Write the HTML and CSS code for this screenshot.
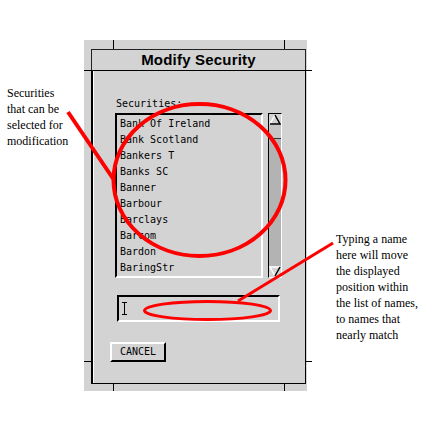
FILE: index.html
```html
<!DOCTYPE html>
<html>
<head>
    <meta charset="UTF-8">
    <title>Modify Security</title>
    <link rel="stylesheet" href="styles.css">
</head>
<body>
    <div class="page">
        <div class="window">
            <span class="tick tick-tl"></span>
            <span class="tick tick-tr"></span>
            <span class="tick tick-bl"></span>
            <span class="tick tick-br"></span>
            <span class="tick tick-lb"></span>
            <span class="tick tick-rb"></span>
            <span class="tick tick-rt"></span>

            <div class="titlebar">Modify Security</div>
            <div class="sep"></div>

            <div class="client">
                <div class="label">Securities:</div>
                <div class="list-row">
                    <div class="list">
                        <div class="item">Bank Of Ireland</div>
                        <div class="item">Bank Scotland</div>
                        <div class="item">Bankers T</div>
                        <div class="item">Banks SC</div>
                        <div class="item">Banner</div>
                        <div class="item">Barbour</div>
                        <div class="item">Barclays</div>
                        <div class="item">Barcom</div>
                        <div class="item">Bardon</div>
                        <div class="item">BaringStr</div>
                    </div>
                    <div class="scrollbar">
                        <svg class="arrow" width="12" height="11" viewBox="0 0 12 11">
                            <polyline points="1,10 6,1" fill="none" stroke="#fff" stroke-width="1.5"/>
                            <polyline points="6,1 11,10 1,10" fill="none" stroke="#000" stroke-width="1.5"/>
                        </svg>
                        <div class="slider"></div>
                        <div class="trough"></div>
                        <svg class="arrow" width="12" height="11" viewBox="0 0 12 11">
                            <polyline points="11,1 1,1 6,10" fill="none" stroke="#fff" stroke-width="1.5"/>
                            <polyline points="6,10 11,1" fill="none" stroke="#000" stroke-width="1.5"/>
                        </svg>
                    </div>
                </div>
                <div class="input">
                    <svg class="cursor" width="7" height="13" viewBox="0 0 7 13">
                        <path d="M1 0.5H6M3.5 0.5V12.5M1 12.5H6" fill="none" stroke="#000" stroke-width="1"/>
                    </svg>
                </div>
                <div class="btn">CANCEL</div>
            </div>
        </div>

        <div class="note note-left">Securities<br>that can be<br>selected for<br>modification</div>
        <div class="note note-right">Typing a name<br>here will move<br>the displayed<br>position within<br>the list of names,<br>to names that<br>nearly match</div>

        <svg class="marks" width="427" height="445" viewBox="0 0 427 445">
            <ellipse cx="199.5" cy="180" rx="86" ry="76" fill="none" stroke="#f00" stroke-width="4"/>
            <line x1="68" y1="112" x2="114" y2="180" stroke="#f00" stroke-width="4"/>
            <ellipse cx="207.5" cy="310.5" rx="63" ry="9" fill="none" stroke="#f00" stroke-width="3"/>
            <line x1="333" y1="243" x2="238" y2="301" stroke="#f00" stroke-width="3"/>
        </svg>
    </div>
</body>
</html>
```

FILE: styles.css
```css
body {
    margin: 0;
    background: #fff;
}
.page {
    position: relative;
    width: 427px;
    height: 445px;
    padding-top: 40px;
    box-sizing: border-box;
}
.window {
    position: relative;
    margin-left: 84px;
    width: 223px;
    height: 351px;
    padding-top: 9px;
    box-sizing: border-box;
    background: #d3d3d3;
    display: flex;
    flex-direction: column;
}
.tick {
    position: absolute;
    background: #000;
}
.tick-tl { left: 29px; top: 0; width: 1px; height: 9px; }
.tick-tr { left: 200px; top: 0; width: 1px; height: 9px; }
.tick-bl { left: 29px; bottom: 0; width: 1px; height: 7px; }
.tick-br { left: 200px; bottom: 0; width: 1px; height: 7px; }
.tick-lb { left: 0; bottom: 29px; width: 7px; height: 1px; }
.tick-rb { left: 222px; bottom: 29px; width: 6px; height: 1px; }
.tick-rt { left: 222px; top: 30px; width: 6px; height: 1px; }

.titlebar {
    margin: 0 1px 0 7px;
    height: 21px;
    border: 1px solid #222;
    border-bottom: none;
    box-sizing: border-box;
    font-family: "Liberation Sans", Arial, sans-serif;
    font-weight: bold;
    font-size: 15px;
    letter-spacing: 0.2px;
    line-height: 20px;
    text-align: center;
    color: #000;
}
.sep {
    height: 1px;
    background: #000;
}
.client {
    flex: 1;
    margin: 0 1px 7px 7px;
    border-left: 2px solid #000;
    border-right: 1px solid #000;
    border-bottom: 1px solid #000;
    box-shadow: inset 1px 0 #fff;
    padding-top: 26px;
    font-family: "DejaVu Sans Mono", "Liberation Mono", monospace;
    font-size: 10px;
    color: #000;
}
.label {
    margin-left: 23px;
    line-height: 13px;
}
.list-row {
    display: flex;
    gap: 5px;
    margin: 3px 0 0 22px;
    height: 165px;
}
.list {
    width: 148px;
    border-top: 2px solid #000;
    border-left: 2px solid #000;
    border-right: 2px solid #fff;
    border-bottom: 2px solid #fff;
    box-sizing: border-box;
    padding: 1px 0 0 3px;
}
.item {
    line-height: 16px;
    white-space: nowrap;
}
.scrollbar {
    width: 14px;
    border-top: 1px solid #000;
    border-left: 1px solid #000;
    border-right: 1px solid #fff;
    border-bottom: 1px solid #fff;
    box-sizing: border-box;
    background: #b3b3b3;
    display: flex;
    flex-direction: column;
}
.arrow {
    display: block;
    background: #d3d3d3;
    flex: none;
}
.slider {
    height: 13px;
    background: #c6c6c6;
    border-bottom: 1px solid #333;
}
.trough {
    flex: 1;
}
.input {
    margin: 17px 0 0 24px;
    width: 163px;
    height: 27px;
    border-top: 2px solid #000;
    border-left: 2px solid #000;
    border-right: 2px solid #fff;
    border-bottom: 2px solid #fff;
    box-sizing: border-box;
    padding: 5px 0 0 2px;
}
.cursor {
    display: block;
}
.btn {
    margin: 20px 0 0 17px;
    width: 56px;
    height: 20px;
    border-top: 2px solid #fff;
    border-left: 2px solid #fff;
    border-right: 2px solid #000;
    border-bottom: 2px solid #000;
    box-sizing: border-box;
    line-height: 16px;
    text-align: center;
}
.note {
    position: absolute;
    font-family: "Liberation Serif", "Times New Roman", serif;
    font-size: 12px;
    line-height: 16px;
    color: #000;
}
.note-left {
    left: 7px;
    top: 85px;
}
.note-right {
    left: 336px;
    top: 231px;
}
.marks {
    position: absolute;
    left: 0;
    top: 0;
    pointer-events: none;
}
```
